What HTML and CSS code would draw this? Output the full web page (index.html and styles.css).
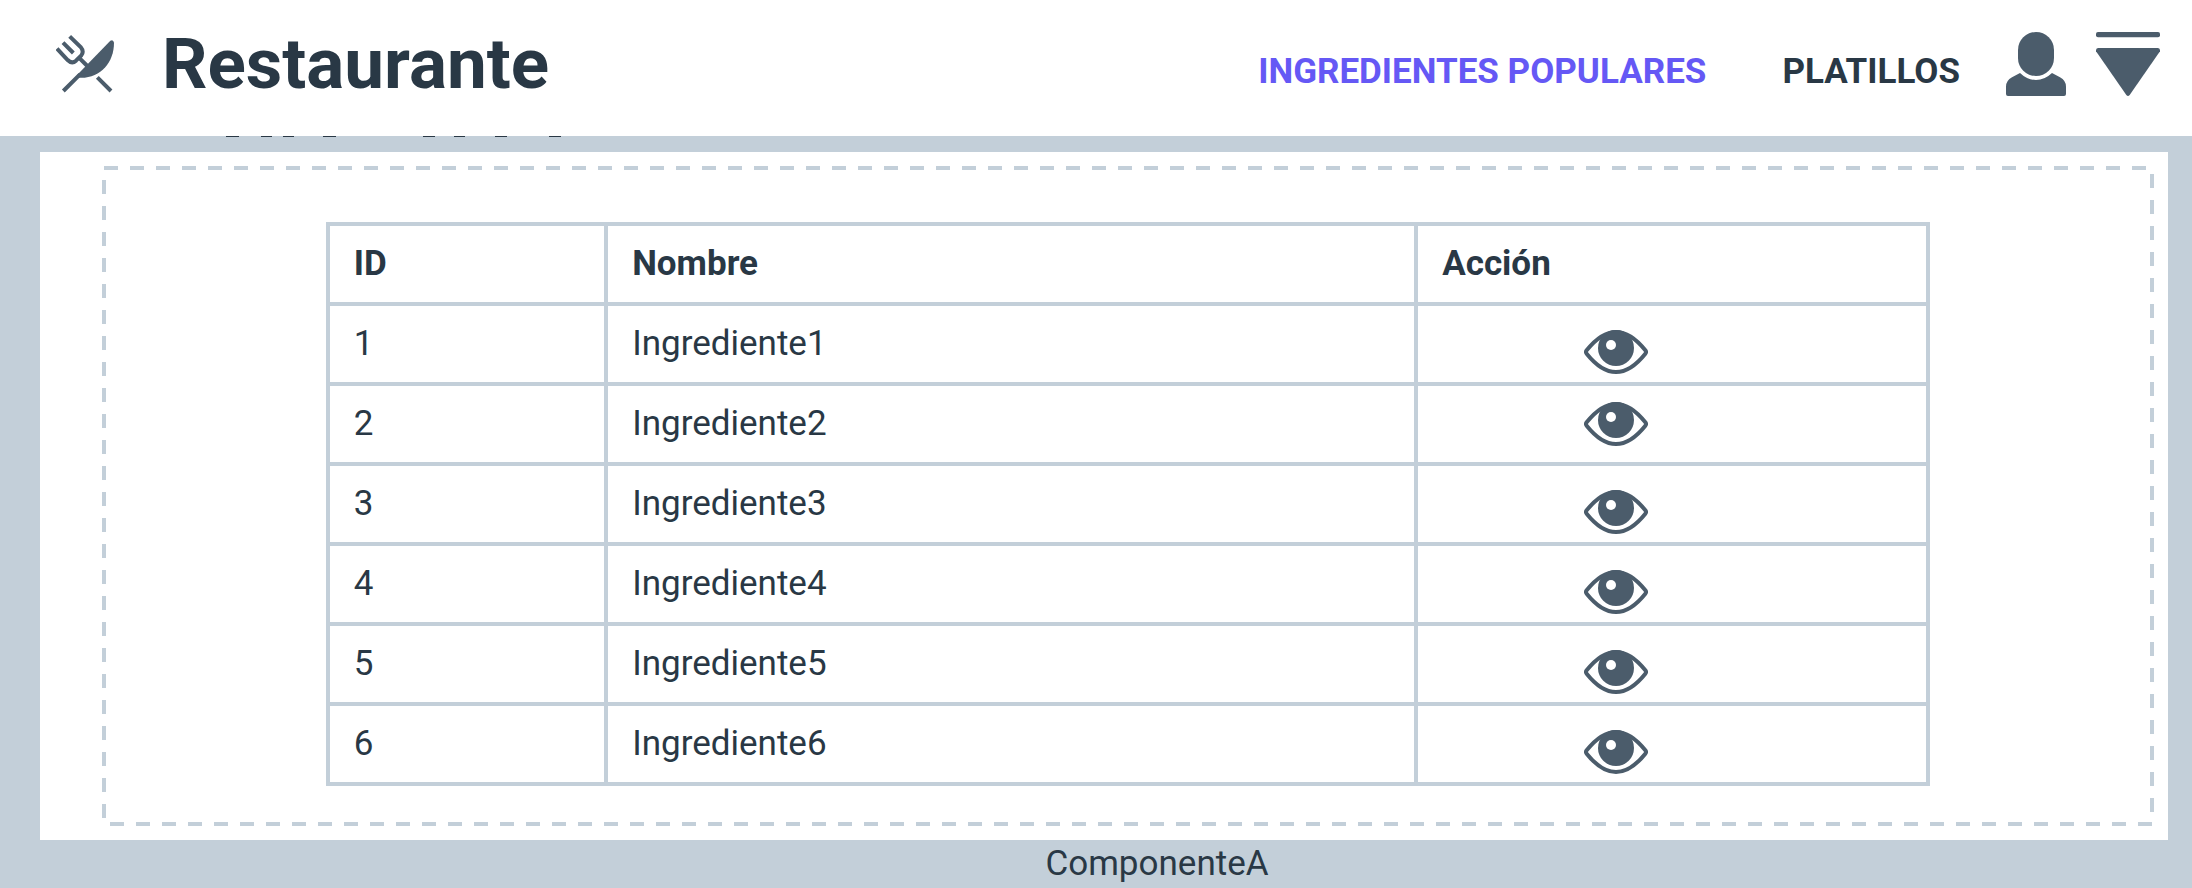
FILE: index.html
```html
<!DOCTYPE html>
<html lang="es">
<head>
<meta charset="utf-8">
<meta name="viewport" content="width=device-width, initial-scale=1">
<title>Restaurante</title>
<link rel="stylesheet" href="styles.css">
</head>
<body>
<svg class="sprite" aria-hidden="true">
  <symbol id="eye" viewBox="72 60 192 132">
    <path d="M80 121C108 86 136 66 168 66C200 66 228 86 256 121Q260 126 256 131C228 166 200 186 168 186C136 186 108 166 80 131Q76 126 80 121Z" fill="none" stroke="currentColor" stroke-width="12"/>
    <circle cx="168" cy="114" r="54" fill="currentColor"/>
    <circle cx="153" cy="105" r="15" fill="#fff"/>
  </symbol>
</svg>
<header class="topbar">
  <svg class="logo" viewBox="48 42 180 180" aria-hidden="true">
    <g fill="none" stroke="currentColor" stroke-width="12">
      <path d="M51 86L83 120Q96 133 108 122L124 106Q133 94 122 81L89 49"/>
      <path d="M69 68L100 99M116 112L142 138M172 172L213 213M70 213L120 163"/>
    </g>
    <path d="M211 62Q220 57 222 68C222 128 180 177 116 173L112 164Z" fill="currentColor"/>
  </svg>
  <h1 class="brand">Restaurante</h1>
  <nav class="nav">
    <a class="nav-link active" href="#ingredientes">INGREDIENTES POPULARES</a>
    <a class="nav-link" href="#platillos">PLATILLOS</a>
  </nav>
  <div class="tools">
    <button class="icon-button" type="button" aria-label="Usuario">
      <svg class="user" viewBox="48 36 180 192">
        <rect x="84" y="36" width="108" height="132" rx="54" fill="currentColor"/>
        <path d="M48 222V200Q48 182 66 172L90 159Q112 180 138 180Q164 180 186 159L210 172Q228 182 228 200V222Q228 228 222 228H54Q48 228 48 222Z" fill="currentColor"/>
      </svg>
    </button>
    <button class="icon-button" type="button" aria-label="Menú">
      <svg class="menu" viewBox="318 36 192 192">
        <rect x="318" y="36" width="192" height="16" rx="6" fill="currentColor"/>
        <path d="M325 84H503Q511 84 510 94L419 225Q414 231 409 225L318 94Q317 84 325 84Z" fill="currentColor"/>
      </svg>
    </button>
  </div>
</header>
<main class="page">
  <svg class="scrolled-edge" aria-hidden="true">
    <path d="M226 0h13M261 0h11M283 0h11M323 0h13M423 0h12M454 0h11M495 0h12M549 0h12"/>
  </svg>
  <section class="panel" id="ingredientes">
    <div class="component">
      <svg class="outline" aria-hidden="true"><rect class="outline-box" x="2" y="2"/></svg>
      <table class="items">
        <thead>
          <tr><th class="col-id" scope="col">ID</th><th class="col-name" scope="col">Nombre</th><th class="col-action" scope="col">Acción</th></tr>
        </thead>
        <tbody>
          <tr><td>1</td><td>Ingrediente1</td><td class="action low"><button class="icon-button" type="button" aria-label="Ver Ingrediente1"><svg class="eye"><use href="#eye"/></svg></button></td></tr>
          <tr><td>2</td><td>Ingrediente2</td><td class="action"><button class="icon-button" type="button" aria-label="Ver Ingrediente2"><svg class="eye"><use href="#eye"/></svg></button></td></tr>
          <tr><td>3</td><td>Ingrediente3</td><td class="action low"><button class="icon-button" type="button" aria-label="Ver Ingrediente3"><svg class="eye"><use href="#eye"/></svg></button></td></tr>
          <tr><td>4</td><td>Ingrediente4</td><td class="action low"><button class="icon-button" type="button" aria-label="Ver Ingrediente4"><svg class="eye"><use href="#eye"/></svg></button></td></tr>
          <tr><td>5</td><td>Ingrediente5</td><td class="action low"><button class="icon-button" type="button" aria-label="Ver Ingrediente5"><svg class="eye"><use href="#eye"/></svg></button></td></tr>
          <tr><td>6</td><td>Ingrediente6</td><td class="action low"><button class="icon-button" type="button" aria-label="Ver Ingrediente6"><svg class="eye"><use href="#eye"/></svg></button></td></tr>
        </tbody>
      </table>
    </div>
  </section>
  <p class="caption">ComponenteA</p>
</main>
</body>
</html>
```
FILE: styles.css
```css
* {
  box-sizing: border-box;
}

body {
  margin: 0;
  background: #c3cfd9;
  color: #293845;
  font-family: Roboto, "Liberation Sans", sans-serif;
  font-size: 35px;
  line-height: 48px;
}

.sprite {
  position: absolute;
  width: 0;
  height: 0;
}

.topbar {
  display: flex;
  align-items: center;
  padding: 24px 32px 32px 56px;
  background: #fff;
}

.logo {
  width: 60px;
  height: 60px;
  color: #4b5c6b;
}

.brand {
  margin: 0 auto 0 46px;
  font-size: 71px;
  line-height: 80px;
  font-weight: 700;
}

.nav {
  display: flex;
  gap: 76px;
  padding-top: 16px;
}

.nav-link {
  color: inherit;
  font-weight: 700;
  text-decoration: none;
  white-space: nowrap;
}

.nav-link.active {
  color: #6558f5;
}

.tools {
  display: flex;
  gap: 30px;
  margin-left: 46px;
}

.icon-button {
  display: block;
  padding: 0;
  border: 0;
  background: none;
  color: #4b5c6b;
  cursor: pointer;
}

.icon-button svg {
  display: block;
}

.user {
  width: 60px;
  height: 64px;
}

.menu {
  width: 64px;
  height: 64px;
}

.scrolled-edge {
  display: block;
  width: 100%;
  height: 16px;
  fill: none;
  stroke: #293845;
  stroke-width: 2px;
}

.panel {
  margin: 0 24px 0 40px;
  padding: 14px 14px 14px 62px;
  background: #fff;
}

.component {
  position: relative;
  padding: 56px 0 40px;
}

.outline {
  position: absolute;
  inset: 0;
  width: 100%;
  height: 100%;
}

.outline-box {
  width: calc(100% - 4px);
  height: calc(100% - 4px);
  fill: none;
  stroke: #c3cfd9;
  stroke-width: 4px;
  stroke-dasharray: 14 12;
}

.items {
  position: relative;
  width: 78.2%;
  margin: 0 auto;
  border-collapse: collapse;
  table-layout: fixed;
}

.items th,
.items td {
  height: 80px;
  padding: 0 24px;
  border: 4px solid #c3cfd9;
  text-align: left;
  vertical-align: middle;
}

.col-id {
  width: 17.4%;
}

.col-action {
  width: 32%;
}

.items .action {
  padding: 0 0 0 166px;
}

.items .low {
  padding-top: 16px;
}

.eye {
  width: 64px;
  height: 44px;
}

.caption {
  margin: 0;
  padding-left: 122px;
  text-align: center;
}
```
